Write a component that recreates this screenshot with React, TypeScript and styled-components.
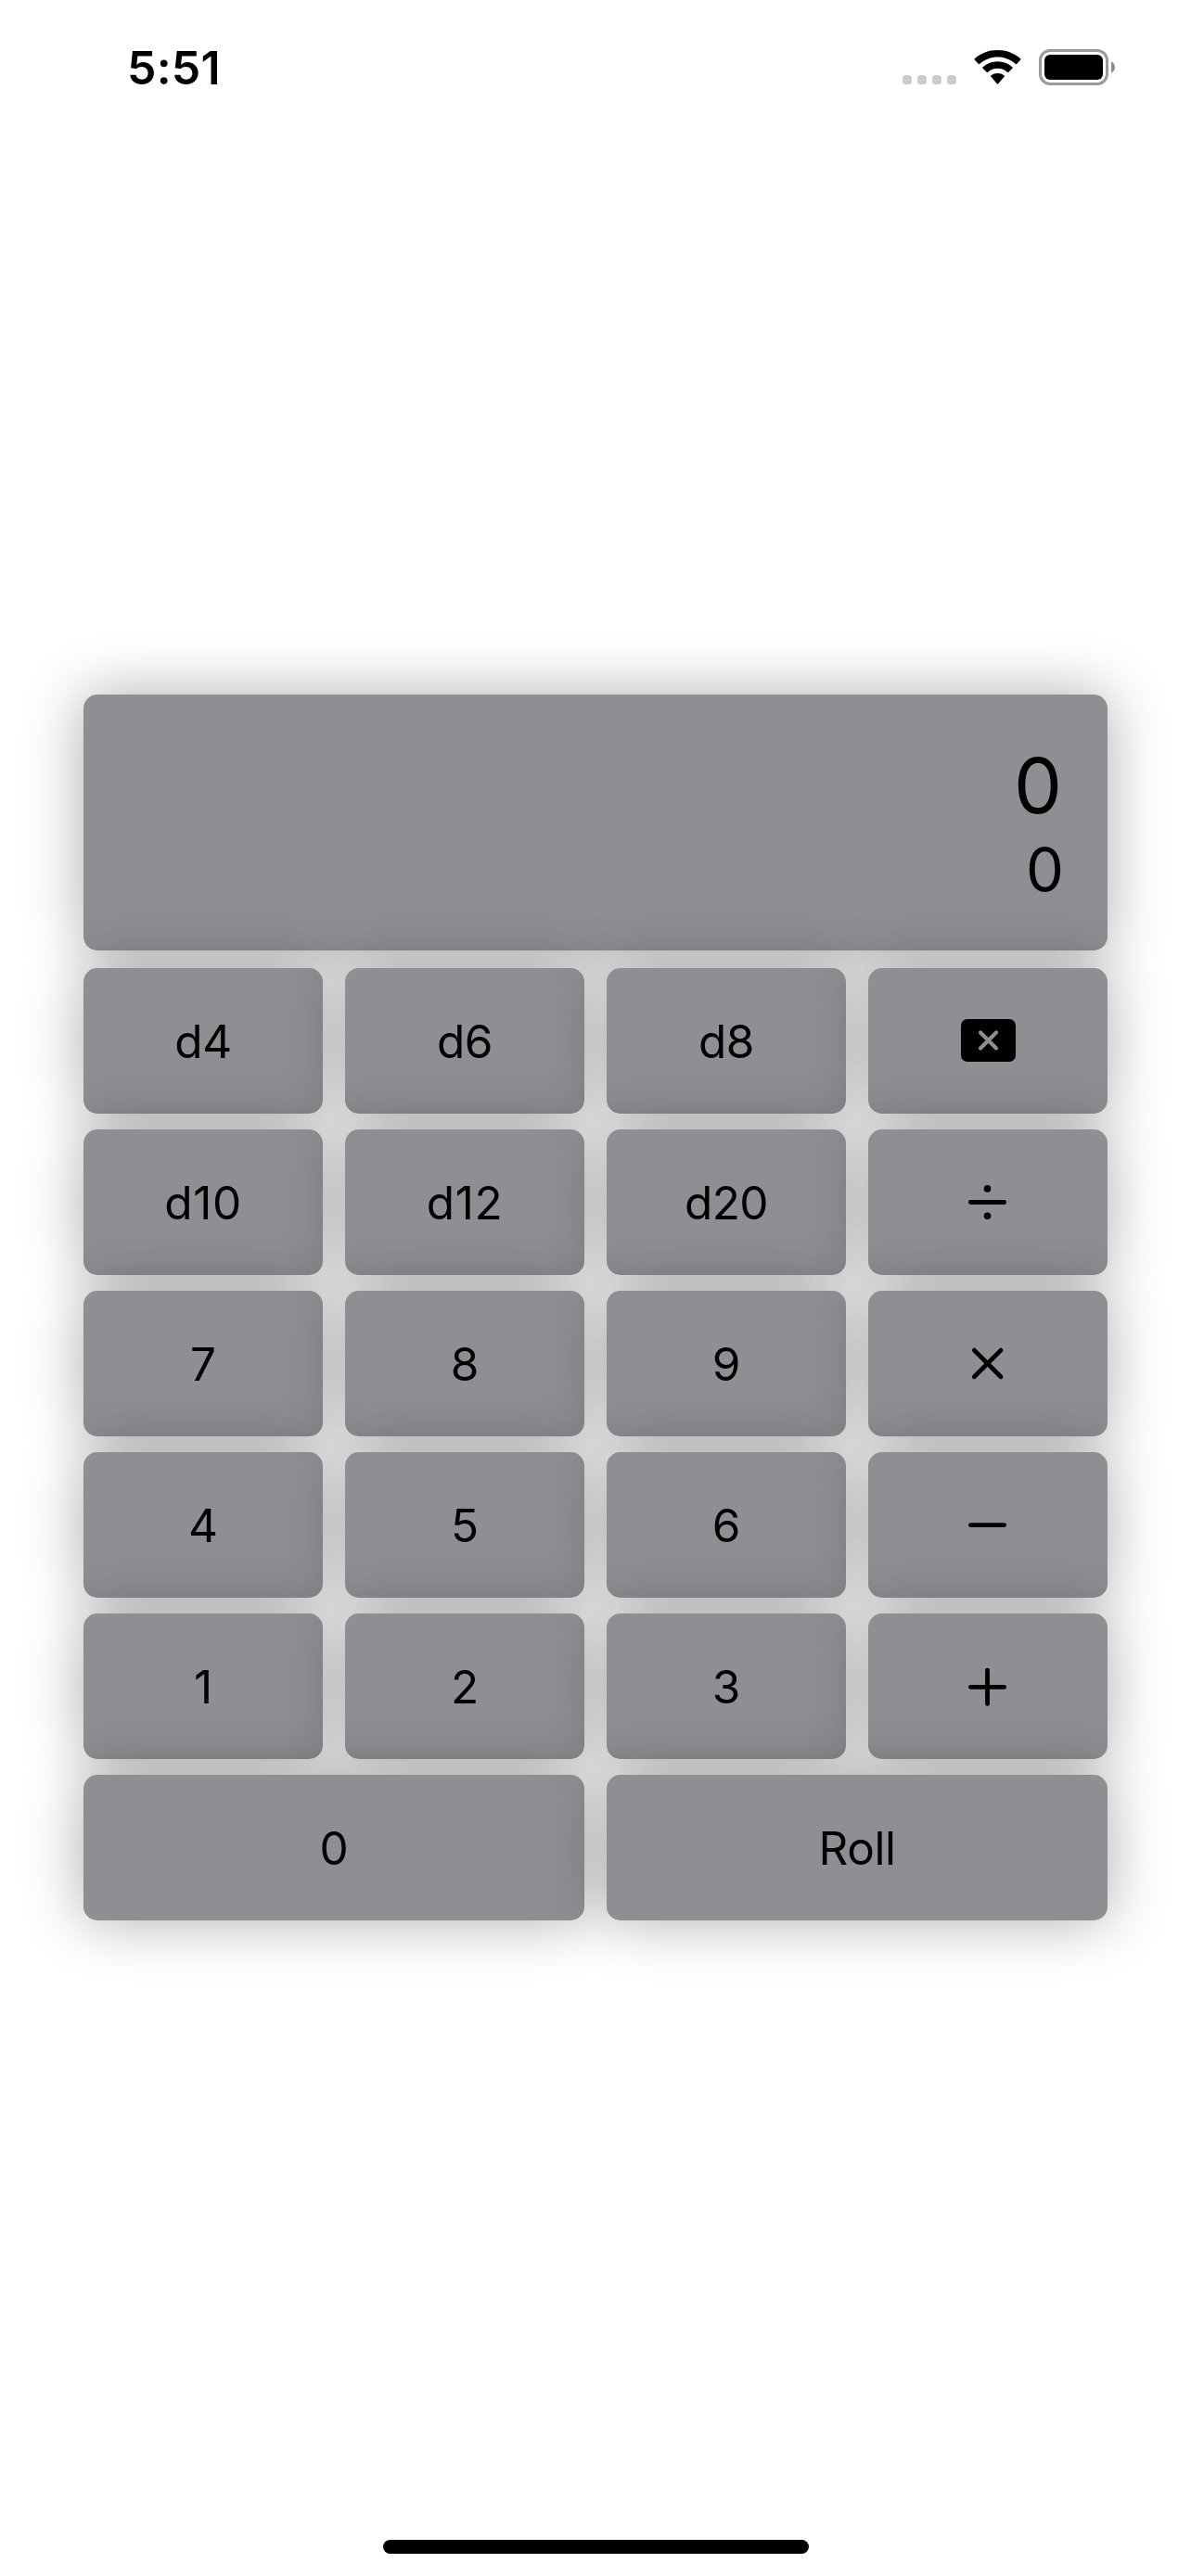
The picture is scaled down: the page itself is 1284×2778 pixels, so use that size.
import React from "react";
import styled, { createGlobalStyle } from "styled-components";

const KEY_COLOR = "#8e8e93";
const KEY_SHADOW = "0 0 64px rgba(0, 0, 0, 0.33)";

const GlobalStyle = createGlobalStyle`
  * { box-sizing: border-box; }
  body { margin: 0; background: #fff; }
`;

const Screen = styled.main`
  display: flex;
  flex-direction: column;
  width: 1284px;
  height: 2778px;
  background: #fff;
  color: #000;
  font-family: Inter, "Liberation Sans", sans-serif;
  overflow: hidden;
`;

const StatusBar = styled.header`
  display: flex;
  justify-content: space-between;
  height: 141px;
  padding: 53px 82px 0 137px;
`;

const Clock = styled.time`
  height: 40px;
  font-size: 50px;
  font-weight: 600;
  line-height: 40px;
  letter-spacing: 0.2px;
`;

const StatusIcons = styled.div`
  display: flex;
  align-items: flex-start;
  height: 40px;
`;

const SignalDots = styled.div`
  display: flex;
  gap: 6px;
  margin: 28px 19px 0 0;
`;

const SignalDot = styled.span`
  width: 10px;
  height: 10px;
  border-radius: 3.5px;
  background: #cbcbcb;
`;

const WifiGlyph = styled.svg`
  width: 51px;
  height: 38px;
  margin: 1px 19px 0 0;
`;

const BatteryShell = styled.div`
  width: 75px;
  height: 39px;
  padding: 3px;
  border: 3px solid #9b9b9b;
  border-radius: 12px;
`;

const BatteryLevel = styled.div`
  height: 100%;
  border-radius: 6px;
  background: #000;
`;

const BatteryCap = styled.svg`
  width: 4px;
  height: 13px;
  margin: 13px 0 0 3px;
`;

const Calculator = styled.section`
  display: flex;
  flex-direction: column;
  gap: 19px;
  margin: 608px 90px 0;
`;

const Display = styled.div`
  display: flex;
  flex-direction: column;
  align-items: flex-end;
  height: 276px;
  padding: 47px 47px 0 0;
  border-radius: 15px;
  background: ${KEY_COLOR};
  box-shadow: ${KEY_SHADOW};
`;

const Readout = styled.output<{ $size: number; $line: number; $inset?: number }>`
  padding-right: ${(p) => p.$inset ?? 0}px;
  font-size: ${(p) => p.$size}px;
  line-height: ${(p) => p.$line}px;
`;

const Keypad = styled.div`
  display: grid;
  grid-template-columns: repeat(4, 258px);
  grid-auto-rows: 157px;
  gap: 17px 24px;
`;

const Key = styled.button<{ $span?: number; $tracking?: number }>`
  grid-column: span ${(p) => p.$span ?? 1};
  display: flex;
  align-items: center;
  justify-content: center;
  padding: 1px 0 0;
  border: 0;
  border-radius: 15px;
  background: ${KEY_COLOR};
  box-shadow: ${KEY_SHADOW};
  color: #000;
  font-family: inherit;
  font-size: 49.5px;
  line-height: 60px;
  letter-spacing: ${(p) => p.$tracking ?? -0.5}px;
`;

const OperatorGlyph = styled.svg`
  width: 60px;
  height: 48px;
  stroke: #000;
  stroke-width: 4.8;
  stroke-linecap: round;
`;

const HomeArea = styled.footer`
  display: flex;
  justify-content: center;
  margin-top: auto;
  padding: 0 0 24px 1px;
`;

const HomeIndicator = styled.div`
  width: 459px;
  height: 15px;
  border-radius: 8px;
  background: #000;
`;

const Backspace = () => (
  <OperatorGlyph viewBox="0 0 60 48" aria-label="Delete">
    <rect x="1" y="0" width="59" height="46" rx="7" stroke="none" />
    <path d="M22 14.4 39 31.4M39 14.4 22 31.4" stroke={KEY_COLOR} strokeWidth="4.2" />
  </OperatorGlyph>
);

const Divide = () => (
  <OperatorGlyph viewBox="0 0 60 48" aria-label="Divide">
    <path d="M11.4 23.5H47.6" />
    <circle cx="29.5" cy="8.9" r="3.8" stroke="none" />
    <circle cx="29.5" cy="38.2" r="3.8" stroke="none" />
  </OperatorGlyph>
);

const Multiply = () => (
  <OperatorGlyph viewBox="0 0 60 48" aria-label="Multiply">
    <path d="M15.3 9.1 44 37.8M44 9.1 15.3 37.8" />
  </OperatorGlyph>
);

const Minus = () => (
  <OperatorGlyph viewBox="0 0 60 48" aria-label="Subtract">
    <path d="M11.4 23.6H47.6" />
  </OperatorGlyph>
);

const Plus = () => (
  <OperatorGlyph viewBox="0 0 60 48" aria-label="Add">
    <path d="M11.4 24.3H47.6M29.5 6.2V42.4" />
  </OperatorGlyph>
);

type KeySpec = { id: string; face: React.ReactNode; span?: number; tracking?: number };

const keys: KeySpec[] = [
  { id: "d4", face: "d4" },
  { id: "d6", face: "d6" },
  { id: "d8", face: "d8" },
  { id: "delete", face: <Backspace /> },
  { id: "d10", face: "d10", tracking: 0.6 },
  { id: "d12", face: "d12", tracking: 0.6 },
  { id: "d20", face: "d20" },
  { id: "divide", face: <Divide /> },
  { id: "7", face: "7", tracking: 0 },
  { id: "8", face: "8", tracking: 0 },
  { id: "9", face: "9", tracking: 0 },
  { id: "multiply", face: <Multiply /> },
  { id: "4", face: "4", tracking: 0 },
  { id: "5", face: "5", tracking: 0 },
  { id: "6", face: "6", tracking: 0 },
  { id: "minus", face: <Minus /> },
  { id: "1", face: "1", tracking: 0 },
  { id: "2", face: "2", tracking: 0 },
  { id: "3", face: "3", tracking: 0 },
  { id: "plus", face: <Plus /> },
  { id: "0", face: "0", span: 2, tracking: 0 },
  { id: "roll", face: "Roll", span: 2 },
];

export default function App() {
  return (
    <Screen>
      <GlobalStyle />
      <StatusBar>
        <Clock>5:51</Clock>
        <StatusIcons>
          <SignalDots>
            {[0, 1, 2, 3].map((i) => (
              <SignalDot key={i} />
            ))}
          </SignalDots>
          <WifiGlyph viewBox="0 0 51 38" aria-label="Wi-Fi">
            <path d="M0.8 10.4Q0.2 9.9 0.8 9.3C14.6-3.1 36.4-3.1 50.2 9.3Q50.8 9.9 50.2 10.4L46.3 14.8Q45.6 15.5 44.9 14.9C34 4.9 17 4.9 6.1 14.9Q5.4 15.5 4.7 14.8Z" />
            <path d="M9.4 19.5Q8.9 19 9.4 18.4C18.5 10.3 32.5 10.3 41.6 18.4Q42.1 19 41.6 19.5L37.4 23.8Q36.8 24.4 36.2 23.9C30.2 18.4 20.8 18.4 14.8 23.9Q14.2 24.4 13.6 23.8Z" />
            <path d="M18.2 28.5Q17.7 28 18.3 27.5C22.4 24.2 28.6 24.2 32.7 27.5Q33.3 28 32.8 28.5L26.2 36.3Q25.5 37.1 24.8 36.3Z" />
          </WifiGlyph>
          <BatteryShell>
            <BatteryLevel />
          </BatteryShell>
          <BatteryCap viewBox="0 0 4 13">
            <path d="M0 0.3C2.4 1.3 4 3.7 4 6.5S2.4 11.7 0 12.7Z" fill="#8f8f8f" />
          </BatteryCap>
        </StatusIcons>
      </StatusBar>

      <Calculator>
        <Display>
          <Readout $size={82.5} $line={103} $inset={2}>0</Readout>
          <Readout $size={65} $line={77}>0</Readout>
        </Display>
        <Keypad>
          {keys.map((k) => (
            <Key key={k.id} $span={k.span} $tracking={k.tracking}>
              {k.face}
            </Key>
          ))}
        </Keypad>
      </Calculator>

      <HomeArea>
        <HomeIndicator />
      </HomeArea>
    </Screen>
  );
}
